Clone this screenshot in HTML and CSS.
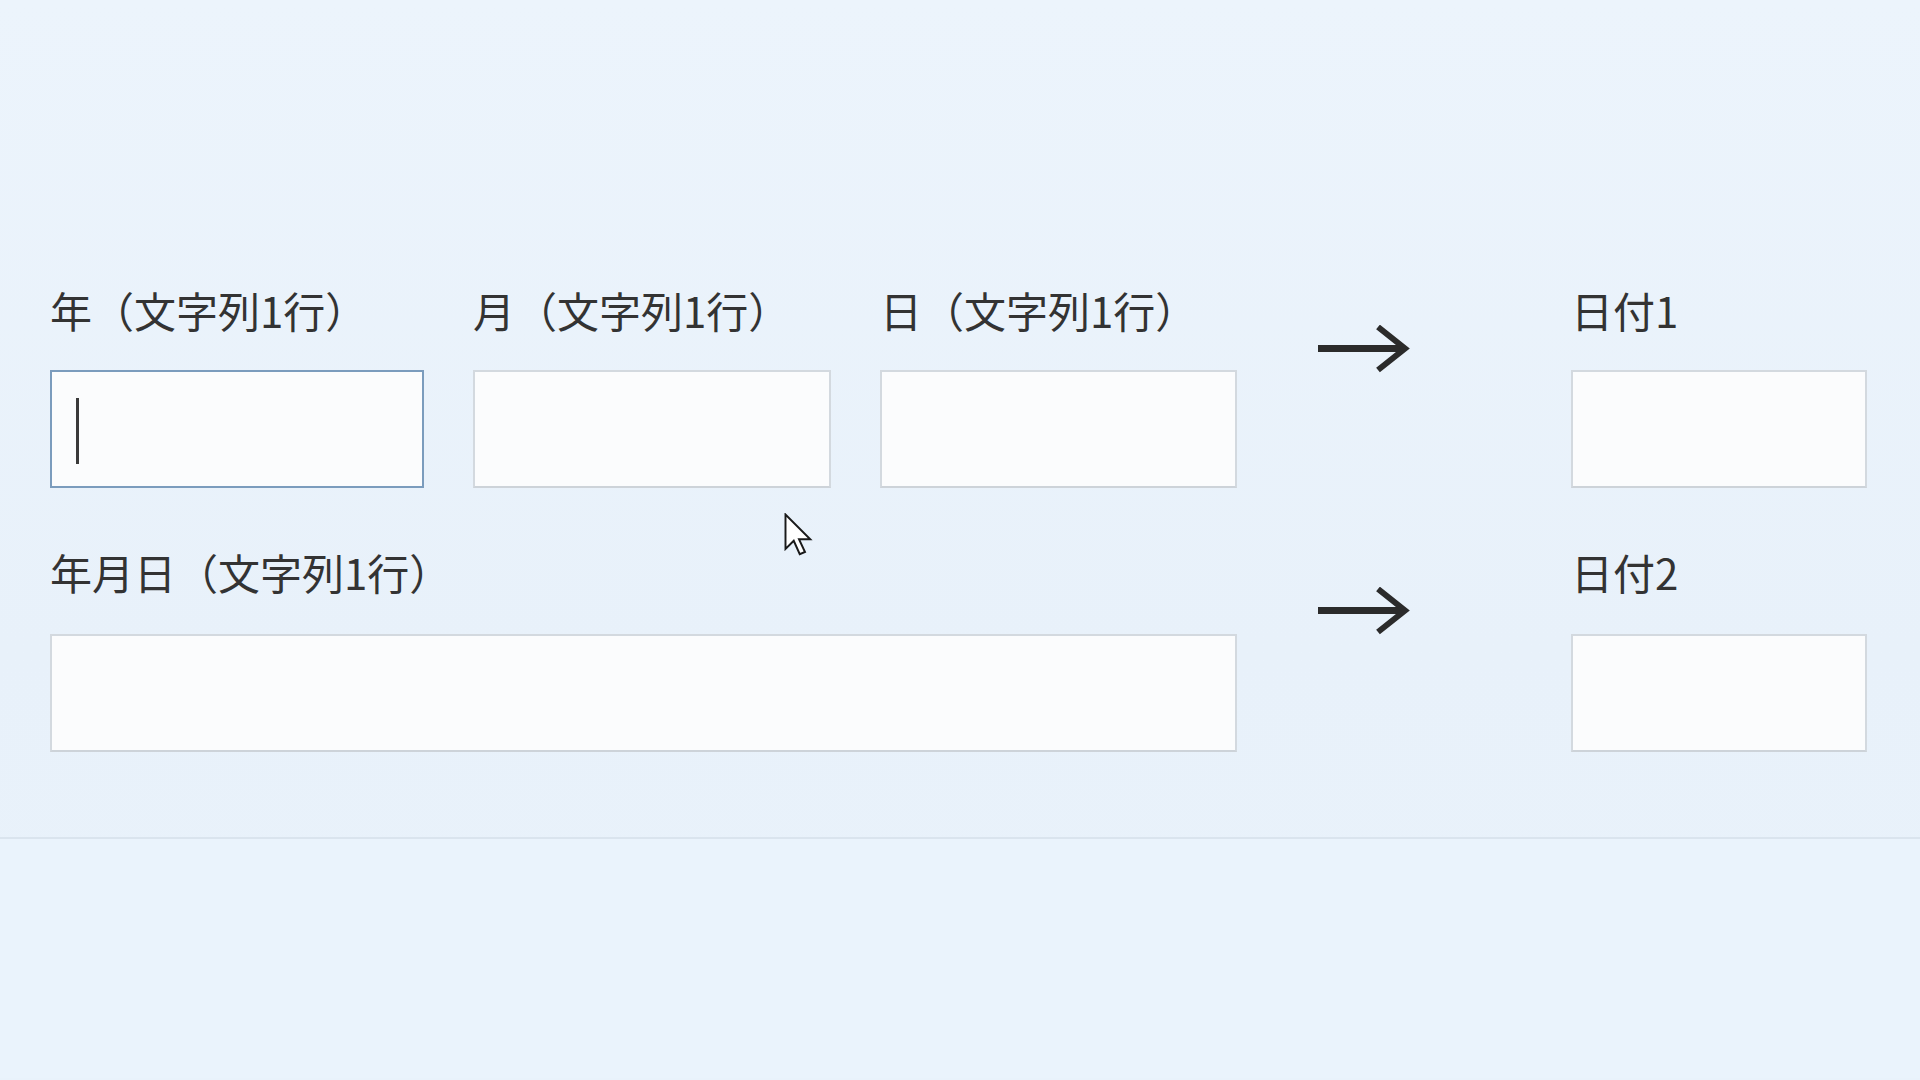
FILE: index.html
```html
<!DOCTYPE html>
<html lang="ja">
<head>
<meta charset="utf-8">
<title>日付フォーム</title>
<link rel="stylesheet" href="styles.css">
</head>
<body>
<div class="page">
  <section class="form">
    <div class="row">
      <div class="field w-year">
        <div class="label">年（文字列1行）</div>
        <div class="input focused"><span class="caret"></span></div>
      </div>
      <div class="field w-month">
        <div class="label">月（文字列1行）</div>
        <div class="input"></div>
      </div>
      <div class="field w-day">
        <div class="label">日（文字列1行）</div>
        <div class="input"></div>
      </div>
      <div class="arrow-cell">
        <svg class="arrow" viewBox="0 0 94 48" width="94" height="48"><path d="M2 23.5 H88" stroke="#2b2b2b" stroke-width="7" fill="none"/><path d="M62 2 L89 23.5 L62 45" stroke="#2b2b2b" stroke-width="6" fill="none" stroke-linejoin="miter"/></svg>
      </div>
      <div class="field w-date">
        <div class="label">日付1</div>
        <div class="input"></div>
      </div>
    </div>
    <div class="row row-two">
      <div class="field w-full">
        <div class="label">年月日（文字列1行）</div>
        <div class="input"></div>
      </div>
      <div class="arrow-cell">
        <svg class="arrow" viewBox="0 0 94 48" width="94" height="48"><path d="M2 23.5 H88" stroke="#2b2b2b" stroke-width="7" fill="none"/><path d="M62 2 L89 23.5 L62 45" stroke="#2b2b2b" stroke-width="6" fill="none" stroke-linejoin="miter"/></svg>
      </div>
      <div class="field w-date">
        <div class="label">日付2</div>
        <div class="input"></div>
      </div>
    </div>
  </section>
  <div class="lower"></div>
  <svg class="pointer" viewBox="0 0 20 30" width="30" height="45"><path d="M1 1 L1 24 L6.5 18.5 L10.5 27.5 L14 26 L10 17.5 L17.5 17.5 Z" fill="#ffffff" stroke="#1a1a1a" stroke-width="1.3" stroke-linejoin="miter"/></svg>
</div>
</body>
</html>
```
FILE: styles.css
```css
html, body {
  margin: 0;
  padding: 0;
}
body {
  background: #e9f2fb;
  font-family: "Noto Sans CJK JP", "Noto Sans", sans-serif;
  color: #333333;
}
.page {
  position: relative;
  width: 1920px;
  height: 1080px;
  overflow: hidden;
  background: linear-gradient(180deg, #ecf4fc 0%, #e8f1fa 60%, #e9f2fb 100%);
}
.form {
  height: 839px;
  box-sizing: border-box;
  padding: 285px 0 0 50px;
  border-bottom: 2px solid #dae4ee;
  display: flex;
  flex-direction: column;
  gap: 59px;
}
.row {
  display: flex;
  align-items: flex-start;
}
.row-two .label {
  margin-bottom: 37px;
}
.field {
  display: flex;
  flex-direction: column;
  margin-right: 49px;
}
.w-year { width: 374px; }
.w-month { width: 358px; }
.w-day { width: 357px; margin-right: 0; }
.w-full { width: 1187px; margin-right: 0; }
.w-date { width: 296px; margin-left: 0; margin-right: 0; }
.label {
  font-size: 42px;
  line-height: 50px;
  height: 50px;
  margin-bottom: 35px;
  white-space: nowrap;
  color: #333333;
}
.input {
  height: 118px;
  box-sizing: border-box;
  background: #fbfcfd;
  border: 2px solid #d3d9df;
  border-bottom-color: #cdd3d9;
  position: relative;
}
.input.focused {
  border-color: #7b9cbd;
}
.caret {
  position: absolute;
  left: 24px;
  top: 26px;
  width: 3px;
  height: 66px;
  background: #3a3a3a;
}
.arrow-cell {
  width: 334px;
  padding: 40px 0 0 79px;
  box-sizing: border-box;
}
.arrow {
  display: block;
}
.lower {
  height: 239px;
  background: #eaf3fc;
}
.pointer {
  position: absolute;
  left: 784px;
  top: 513px;
}
```
